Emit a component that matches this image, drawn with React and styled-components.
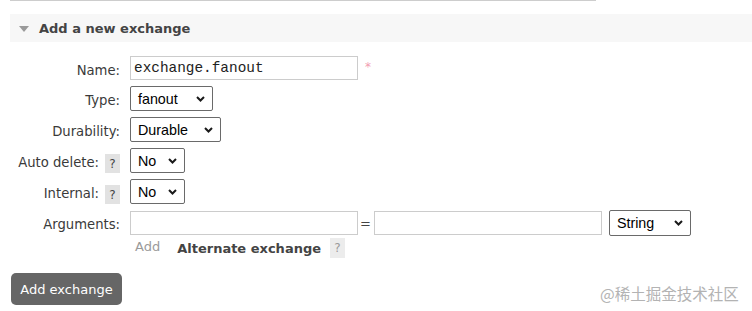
import React from "react";
import styled, { createGlobalStyle } from "styled-components";

const GlobalStyle = createGlobalStyle`
  html, body {
    margin: 0;
    padding: 0;
    background: #fff;
  }
  body {
    font-family: "DejaVu Sans", Verdana, sans-serif;
    font-size: 13px;
    color: #3a3a3a;
  }
`;

const Page = styled.div`
  position: relative;
  width: 752px;
  height: 311px;
  overflow: hidden;
`;

const TopRule = styled.div`
  margin-left: 10px;
  width: 586px;
  height: 1px;
  background: #cdcdcd;
`;

const SectionHeader = styled.h2`
  margin: 13px 0 0 10px;
  height: 28px;
  display: flex;
  align-items: center;
  gap: 10px;
  padding-left: 9px;
  background: #f7f7f7;
  font-size: 13px;
  font-weight: bold;
  color: #444;
`;

const Caret = styled.span`
  width: 0;
  height: 0;
  margin-top: 2px;
  border-left: 5px solid transparent;
  border-right: 5px solid transparent;
  border-top: 6px solid #9a9a9a;
`;

const Form = styled.div`
  display: grid;
  grid-template-columns: 110px auto;
  justify-content: start;
  column-gap: 10px;
  row-gap: 6px;
  margin: 14px 0 0 10px;
`;

const Label = styled.div`
  display: flex;
  justify-content: flex-end;
  align-items: flex-start;
  gap: 6px;
  padding-top: 7px;
  line-height: 16px;
  white-space: nowrap;
  color: #3a3a3a;
  font-size: 13.2px;
`;

const Field = styled.div`
  display: flex;
  align-items: center;
  margin-top: ${(p) => p.$shift || 0}px;
`;

const Help = styled.span`
  box-sizing: border-box;
  width: 15px;
  height: ${(p) => (p.$muted ? 20 : 19)}px;
  margin-top: -1px;
  display: flex;
  align-items: center;
  justify-content: center;
  background: ${(p) => (p.$muted ? "#ececec" : "#e2e2e2")};
  color: ${(p) => (p.$muted ? "#9a9a9a" : "#444")};
  font-size: 12px;
  margin-left: ${(p) => p.$gap || 0}px;
`;

const TextInput = styled.input`
  box-sizing: border-box;
  width: 228px;
  height: 24px;
  margin: 0;
  padding: 0 3px;
  border: 1px solid #cccccc;
  border-radius: 0;
  outline: none;
  font-family: "Liberation Mono", "Courier New", monospace;
  font-size: 14.4px;
  color: #222;
  background: #fff;
`;

const Required = styled.span`
  align-self: flex-start;
  margin: 4px 0 0 7px;
  font-size: 12px;
  color: #f29cb1;
`;

const SelectBox = styled.div`
  box-sizing: border-box;
  width: ${(p) => p.$width}px;
  height: ${(p) => p.$height || 25}px;
  display: flex;
  align-items: center;
  justify-content: space-between;
  padding: 0 7px;
  border: 1px solid #6a6a6a;
  border-radius: 2px;
  font-family: "Liberation Sans", Arial, sans-serif;
  font-size: 14.3px;
  color: #000;
  margin-left: ${(p) => p.$gap || 0}px;
`;

const Equals = styled.span`
  margin: 0 3px 0 2px;
  color: #444;
`;

const AddLink = styled.span`
  margin: 0 0 4px 5px;
  color: #9a9a9a;
`;

const SubTitle = styled.span`
  margin-left: 17px;
  font-weight: bold;
  color: #444;
`;

const SubmitButton = styled.button`
  margin: 15px 0 0 11px;
  width: 111px;
  height: 32px;
  padding: 0;
  border: none;
  border-radius: 5px;
  background: #666;
  color: #fff;
  font-family: "DejaVu Sans", Verdana, sans-serif;
  font-size: 13px;
`;

const Watermark = styled.div`
  position: absolute;
  left: 600px;
  top: 282px;
  font-family: "Noto Sans CJK SC", sans-serif;
  font-size: 15.5px;
  color: #b3b3b3;
  white-space: nowrap;
`;

const Chevron = () => (
  <svg width="9" height="6" viewBox="0 0 9 6">
    <polyline points="1,1 4.5,4.5 8,1" fill="none" stroke="#1a1a1a" strokeWidth="2" />
  </svg>
);

const Select = ({ width, height, gap, children }) => (
  <SelectBox $width={width} $height={height} $gap={gap}>
    <span>{children}</span>
    <Chevron />
  </SelectBox>
);

export default function App() {
  return (
    <>
      <GlobalStyle />
      <Page>
        <TopRule />
        <SectionHeader>
          <Caret />
          Add a new exchange
        </SectionHeader>
        <Form>
          <Label>Name:</Label>
          <Field>
            <TextInput defaultValue="exchange.fanout" />
            <Required>*</Required>
          </Field>

          <Label>Type:</Label>
          <Field>
            <Select width={83}>fanout</Select>
          </Field>

          <Label>Durability:</Label>
          <Field>
            <Select width={91}>Durable</Select>
          </Field>

          <Label>
            Auto delete:<Help>?</Help>
          </Label>
          <Field>
            <Select width={55}>No</Select>
          </Field>

          <Label>
            Internal:<Help>?</Help>
          </Label>
          <Field>
            <Select width={55}>No</Select>
          </Field>

          <Label>Arguments:</Label>
          <Field>
            <TextInput />
            <Equals>=</Equals>
            <TextInput />
            <Select width={82} height={26} gap={7}>
              String
            </Select>
          </Field>

          <span />
          <Field $shift={-3}>
            <AddLink>Add</AddLink>
            <SubTitle>Alternate exchange</SubTitle>
            <Help $muted $gap={9}>
              ?
            </Help>
          </Field>
        </Form>
        <SubmitButton>Add exchange</SubmitButton>
        <Watermark>@稀土掘金技术社区</Watermark>
      </Page>
    </>
  );
}
